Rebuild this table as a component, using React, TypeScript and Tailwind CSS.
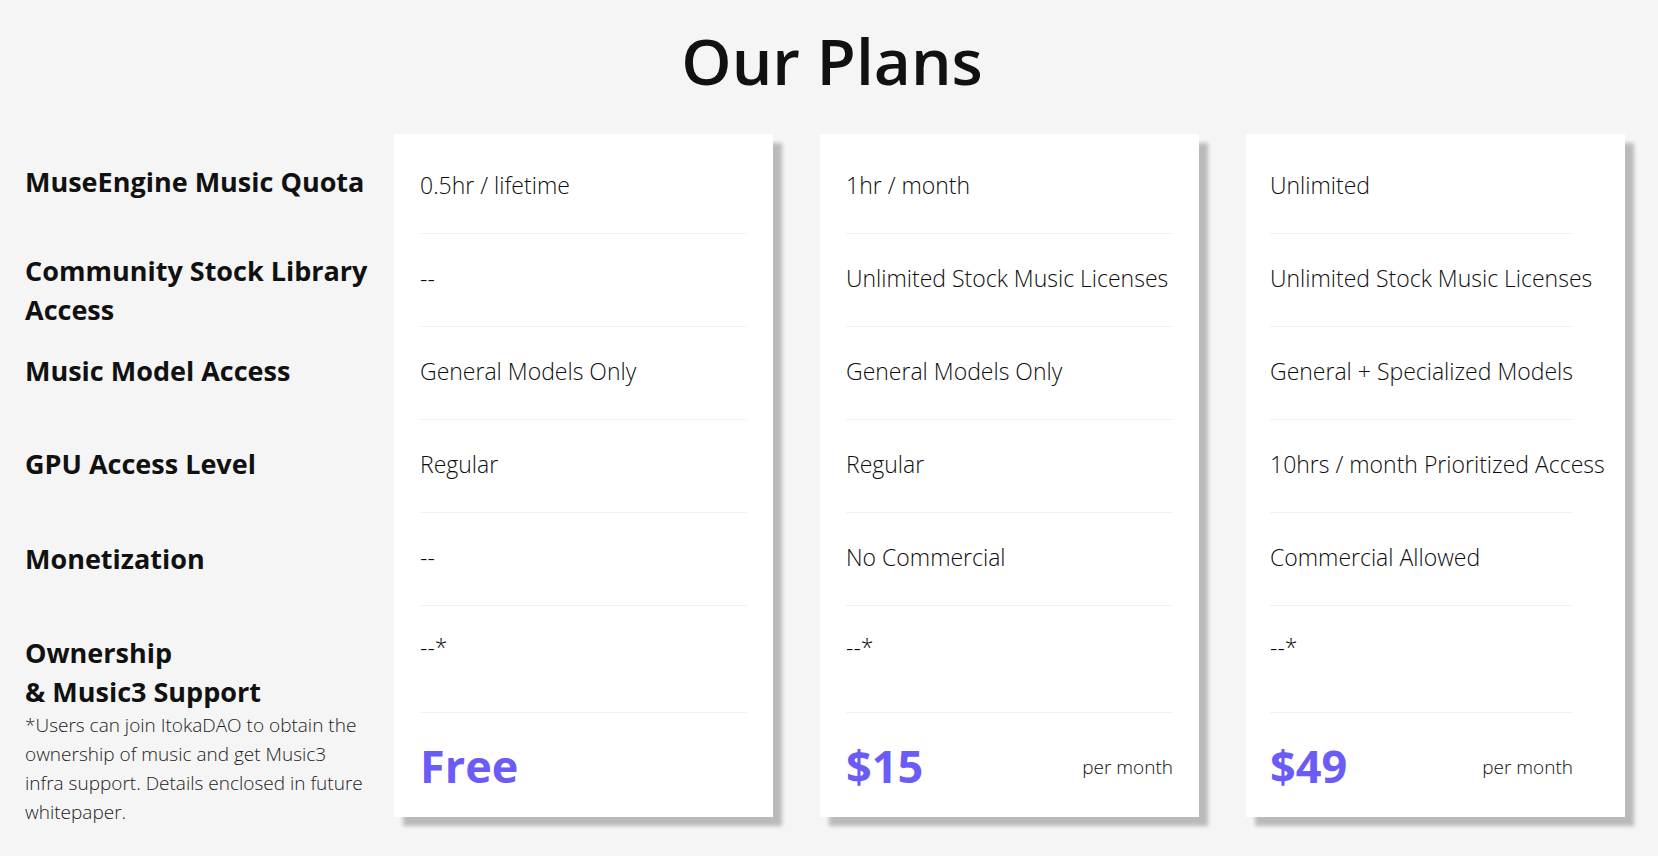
import React from 'react';

const font = { fontFamily: '"Open Sans", "Liberation Sans", sans-serif' };

const labels = [
  { text: ['MuseEngine Music Quota'], pad: 'pt-[28px]' },
  { text: ['Community Stock Library', 'Access'], pad: 'pt-[17px]' },
  { text: ['Music Model Access'], pad: 'pt-[24px]' },
  { text: ['GPU Access Level'], pad: 'pt-[24px]' },
  { text: ['Monetization'], pad: 'pt-[26px]' },
  { text: ['Ownership', '& Music3 Support'], pad: 'pt-[27px]' },
];

const footnote = [
  '*Users can join ItokaDAO to obtain the',
  'ownership of music and get Music3',
  'infra support. Details enclosed in future',
  'whitepaper.',
];

const plans = [
  {
    values: ['0.5hr / lifetime', '--', 'General Models Only', 'Regular', '--', '--*'],
    price: 'Free',
    per: false,
    inner: 'pl-[26px] pr-[26px]',
  },
  {
    values: ['1hr / month', 'Unlimited Stock Music Licenses', 'General Models Only', 'Regular', 'No Commercial', '--*'],
    price: '$15',
    per: true,
    inner: 'pl-[26px] pr-[26px]',
  },
  {
    values: [
      'Unlimited',
      'Unlimited Stock Music Licenses',
      'General + Specialized Models',
      '10hrs / month Prioritized Access',
      'Commercial Allowed',
      '--*',
    ],
    price: '$49',
    per: true,
    inner: 'pl-[24px] pr-[52px]',
  },
];

function PlanCard({ plan }: { plan: (typeof plans)[number] }) {
  return (
    <div className="w-[379px] h-[683px] bg-white shadow-[9px_9px_4px_rgba(0,0,0,0.24)] pt-[7px] flex flex-col">
      <div className={`${plan.inner} flex flex-col`}>
        {plan.values.slice(0, 5).map((v, i) => (
          <div
            key={i}
            className="h-[93px] pb-[3px] flex items-center border-b border-[#f1f1f1] text-[23px] font-light text-[#0d0d0d] whitespace-nowrap"
          >
            {v}
          </div>
        ))}
        {/* ownership row sits higher than the others */}
        <div className="h-[107px] pt-[26px] border-b border-[#f1f1f1] text-[23px] leading-[30px] font-light text-[#0d0d0d]">
          {plan.values[5]}
        </div>
        <div className="h-[104px] flex items-center justify-between">
          <span className="text-[45px] font-bold text-[#6b5cf7] leading-none">{plan.price}</span>
          {plan.per && <span className="text-[19px] font-light text-[#0d0d0d] pt-[4px]">per month</span>}
        </div>
      </div>
    </div>
  );
}

export default function App() {
  return (
    <div className="w-[1658px] h-[856px] bg-[#f5f5f5] overflow-hidden" style={font}>
      <div className="h-[134px] flex items-center justify-center pb-[12px] pl-[6px]">
        <h1 className="text-[64px] font-semibold text-[#111111] leading-none">Our Plans</h1>
      </div>

      <div className="flex pl-[25px]">
        <div className="w-[369px] flex flex-col">
          {labels.map((l, i) => (
            <div
              key={i}
              className={`${i === 0 ? 'h-[100px]' : i === 5 ? 'h-auto' : 'h-[93px]'} ${l.pad} text-[27px] leading-[39px] font-bold text-[#111111]`}
            >
              {l.text.map((t) => (
                <div key={t} className="whitespace-nowrap">{t}</div>
              ))}
            </div>
          ))}
          <div className="text-[19px] leading-[29px] font-light text-[#1b1b1b]">
            {footnote.map((t) => (
              <div key={t} className="whitespace-nowrap">{t}</div>
            ))}
          </div>
        </div>

        <div className="flex gap-[47px]">
          {plans.map((p, i) => (
            <PlanCard key={i} plan={p} />
          ))}
        </div>
      </div>
    </div>
  );
}
